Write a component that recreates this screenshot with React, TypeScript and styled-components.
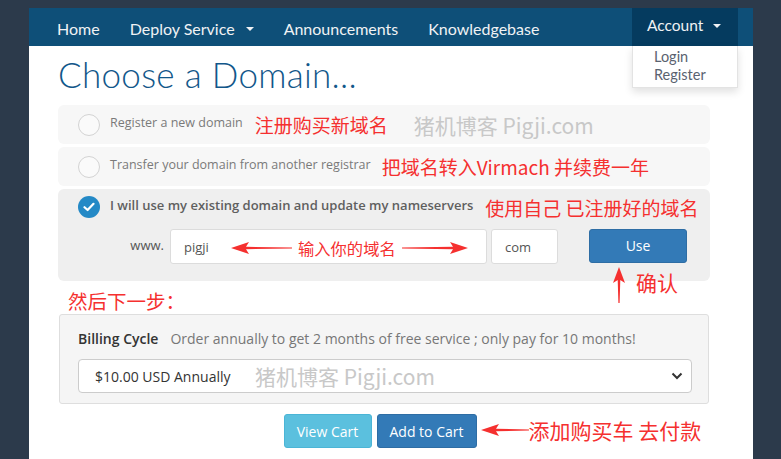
import React from "react";
import styled, { createGlobalStyle } from "styled-components";

const GlobalStyle = createGlobalStyle`
  html, body {
    margin: 0;
    padding: 0;
    background: #2c3a4b;
  }
  body {
    font-family: "Open Sans", "Noto Sans", sans-serif;
  }
  * { box-sizing: border-box; }
`;

const CJK = `"Noto Sans CJK SC", "Noto Sans", sans-serif`;

/* ---------- shell + nav ---------- */

const Shell = styled.div`
  width: 724px;
  min-height: 451px;
  margin: 8px 0 0 29px;
  background: #fff;
`;

const NavBar = styled.nav`
  height: 38px;
  display: flex;
  align-items: stretch;
  background: #0e4f78;
  padding-left: 13px;
  font-family: Lato, "Open Sans", sans-serif;
`;

const NavItem = styled.div<{ $dark?: boolean }>`
  display: flex;
  align-items: center;
  gap: 11px;
  padding: ${(p) => (p.$dark ? "0 15px 4px 15px" : "2px 15px 0 15px")};
  font-size: 16px;
  color: #f0f2f4;
  background: ${(p) => (p.$dark ? "#053b5f" : "transparent")};
  position: relative;
`;

const AccountItem = styled(NavItem)`
  margin-left: auto;
  margin-right: 15px;
  width: 106px;
  font-size: 15.5px;
  gap: 10px;
`;

const Caret = styled.span`
  width: 0;
  height: 0;
  border-left: 4px solid transparent;
  border-right: 4px solid transparent;
  border-top: 4px solid #f0f2f4;
  margin-top: 2px;
`;

const Dropdown = styled.div`
  position: absolute;
  top: 38px;
  left: 0;
  width: 106px;
  padding: 2px 0 3px 21px;
  background: #fff;
  border: 1px solid #e3e3e3;
  border-top: none;
  box-shadow: 0 4px 8px rgba(0, 0, 0, 0.12);
  color: #5a6270;
  font-size: 14.5px;
  line-height: 18px;
  z-index: 5;
`;

/* ---------- content ---------- */

const Content = styled.main`
  width: 652px;
  margin-left: 29px;
`;

const Title = styled.h1`
  margin: 0;
  padding: 7px 0 10px;
  font-family: Lato, "Open Sans", sans-serif;
  font-weight: 300;
  font-size: 35px;
  line-height: 42px;
  color: #12578a;
  letter-spacing: 0.3px;
`;

const OptionPanel = styled.div<{ $active?: boolean }>`
  background: ${(p) => (p.$active ? "#efefef" : "#f7f7f7")};
  border-radius: 6px;
  margin-bottom: ${(p) => (p.$active ? "0" : "3px")};
  padding: ${(p) => (p.$active ? "7px 0 0 20px" : "0 0 0 20px")};
  height: ${(p) => (p.$active ? "92px" : "39px")};
`;

const OptionRow = styled.div`
  height: 39px;
  display: flex;
  align-items: center;
`;

const ActiveRow = styled(OptionRow)`
  height: 22px;
`;

const Radio = styled.span`
  width: 22px;
  height: 22px;
  border-radius: 50%;
  border: 1.5px solid #d3d3d3;
  background: #fafafa;
  flex-shrink: 0;
`;

const CheckedRadio = styled.span`
  width: 22px;
  height: 22px;
  border-radius: 50%;
  background: #2489c6;
  flex-shrink: 0;
  display: flex;
  align-items: center;
  justify-content: center;
`;

const OptionLabel = styled.span<{ $bold?: boolean }>`
  margin-left: 10px;
  font-size: ${(p) => (p.$bold ? 13 : 12.5)}px;
  font-weight: ${(p) => (p.$bold ? 600 : 400)};
  color: ${(p) => (p.$bold ? "#5f5f5f" : "#7a7a7a")};
  margin-top: -5px;
`;

const Note = styled.span<{ $gap: number; $size?: number }>`
  margin-left: ${(p) => p.$gap}px;
  font-family: ${CJK};
  font-size: ${(p) => p.$size ?? 19}px;
  color: #f5302f;
  white-space: nowrap;
`;

const Watermark = styled.span<{ $gap: number }>`
  margin-left: ${(p) => p.$gap}px;
  font-family: ${CJK};
  font-size: 21px;
  color: #c8c8c8;
  white-space: nowrap;
`;

const DomainRow = styled.div`
  display: flex;
  align-items: center;
  margin-top: 11px;
`;

const WwwLabel = styled.span`
  width: 92px;
  text-align: right;
  padding-right: 6px;
  font-size: 13px;
  color: #555;
  margin-top: -4px;
`;

const TextBox = styled.div<{ $w: number }>`
  width: ${(p) => p.$w}px;
  height: 35px;
  background: #fff;
  border: 1px solid #dcdcdc;
  border-radius: 3px;
  display: flex;
  align-items: center;
  padding-left: 13px;
  font-size: 13px;
  color: #555;
  margin-right: 4px;
  position: relative;
`;

const InputNote = styled.div`
  position: absolute;
  left: 60px;
  top: 6px;
  display: flex;
  align-items: center;
  gap: 6px;
`;

const Button = styled.div<{ $variant: "primary" | "info"; $w: number }>`
  width: ${(p) => p.$w}px;
  height: 34px;
  display: flex;
  align-items: center;
  justify-content: center;
  border-radius: 3px;
  font-size: 14px;
  color: #fff;
  background: ${(p) => (p.$variant === "info" ? "#5bc0de" : "#337ab7")};
  border: 1px solid ${(p) => (p.$variant === "info" ? "#4bb5d6" : "#2e6da4")};
`;

const UseWrap = styled.div`
  margin-left: 27px;
  margin-top: -2px;
  position: relative;
`;

const ConfirmNote = styled.div`
  position: absolute;
  left: 24px;
  top: 38px;
  display: flex;
  align-items: flex-start;
  gap: 11px;
`;

const NextStep = styled.div`
  height: 33px;
  padding: 5px 0 0 10px;
  font-family: ${CJK};
  font-size: 19.5px;
  color: #f5302f;
`;

const BillingPanel = styled.section`
  margin-left: 1px;
  width: 650px;
  background: #f5f5f5;
  border: 1px solid #dedede;
  border-radius: 3px;
  padding: 14px 16px 10px 18px;
`;

const BillingHead = styled.div`
  display: flex;
  align-items: baseline;
  height: 22px;
  margin-bottom: 8px;
`;

const BillingTitle = styled.span`
  font-size: 14px;
  font-weight: 600;
  color: #333;
`;

const BillingDesc = styled.span`
  margin-left: 12px;
  font-size: 14px;
  color: #777;
`;

const Select = styled.div`
  height: 34px;
  background: #fff;
  border: 1px solid #ccc;
  border-radius: 4px;
  display: flex;
  align-items: center;
  padding: 0 8px 0 16px;
  font-size: 14px;
  color: #333;
`;

const SelectValue = styled.span`
  width: 160px;
`;

const Chevron = styled.svg`
  margin-left: auto;
`;

const ButtonRow = styled.div`
  display: flex;
  justify-content: center;
  padding: 10px 8px 0 0;
`;

const ButtonGroup = styled.div`
  display: flex;
  gap: 5px;
  position: relative;
`;

const CartNote = styled.div`
  position: absolute;
  left: 100%;
  top: 1px;
  margin-left: 4px;
  display: flex;
  align-items: center;
`;

/* ---------- drawings ---------- */

function ArrowH({ w, dir }: { w: number; dir: "left" | "right" }) {
  const h = 12;
  const head = 18;
  const pts =
    dir === "left"
      ? `0,${h / 2} ${head},0 ${head - 3},${h / 2 - 1.2} ${w},${h / 2 - 0.6} ${w},${h / 2 + 0.6} ${head - 3},${h / 2 + 1.2} ${head},${h}`
      : `${w},${h / 2} ${w - head},0 ${w - head + 3},${h / 2 - 1.2} 0,${h / 2 - 0.6} 0,${h / 2 + 0.6} ${w - head + 3},${h / 2 + 1.2} ${w - head},${h}`;
  return (
    <svg width={w} height={h} viewBox={`0 0 ${w} ${h}`}>
      <polygon points={pts} fill="#f5302f" />
    </svg>
  );
}

function ArrowUp() {
  return (
    <svg width="12" height="36" viewBox="0 0 12 36">
      <polygon points="6,0 12,16 7.3,13 6.6,36 5.4,36 4.7,13 0,16" fill="#f5302f" />
    </svg>
  );
}

function Check() {
  return (
    <svg width="12" height="10" viewBox="0 0 12 10">
      <path d="M1.5 5.2 L4.6 8 L10.5 1.8" fill="none" stroke="#fff" strokeWidth="2.2" strokeLinecap="round" strokeLinejoin="round" />
    </svg>
  );
}

export default function App() {
  return (
    <>
      <GlobalStyle />
      <Shell>
        <NavBar>
          <NavItem>Home</NavItem>
          <NavItem>
            Deploy Service <Caret />
          </NavItem>
          <NavItem>Announcements</NavItem>
          <NavItem>Knowledgebase</NavItem>
          <AccountItem $dark>
            Account <Caret />
            <Dropdown>
              <div>Login</div>
              <div>Register</div>
            </Dropdown>
          </AccountItem>
        </NavBar>

        <Content>
          <Title>Choose a Domain...</Title>

          <OptionPanel>
            <OptionRow>
              <Radio />
              <OptionLabel>Register a new domain</OptionLabel>
              <Note $gap={12}>注册购买新域名</Note>
              <Watermark $gap={26}>猪机博客 Pigji.com</Watermark>
            </OptionRow>
          </OptionPanel>

          <OptionPanel>
            <OptionRow>
              <Radio />
              <OptionLabel>Transfer your domain from another registrar</OptionLabel>
              <Note $gap={11}>把域名转入Virmach 并续费一年</Note>
            </OptionRow>
          </OptionPanel>

          <OptionPanel $active>
            <ActiveRow>
              <CheckedRadio>
                <Check />
              </CheckedRadio>
              <OptionLabel $bold>I will use my existing domain and update my nameservers</OptionLabel>
              <Note $gap={12}>使用自己 已注册好的域名</Note>
            </ActiveRow>
            <DomainRow>
              <WwwLabel>www.</WwwLabel>
              <TextBox $w={317}>
                pigji
                <InputNote>
                  <ArrowH w={61} dir="left" />
                  <Note $gap={0} $size={16.3}>输入你的域名</Note>
                  <ArrowH w={66} dir="right" />
                </InputNote>
              </TextBox>
              <TextBox $w={67}>com</TextBox>
              <UseWrap>
                <Button $variant="primary" $w={98}>
                  Use
                </Button>
                <ConfirmNote>
                  <ArrowUp />
                  <Note $gap={0} $size={21}>确认</Note>
                </ConfirmNote>
              </UseWrap>
            </DomainRow>
          </OptionPanel>

          <NextStep>然后下一步：</NextStep>

          <BillingPanel>
            <BillingHead>
              <BillingTitle>Billing Cycle</BillingTitle>
              <BillingDesc>Order annually to get 2 months of free service ; only pay for 10 months!</BillingDesc>
            </BillingHead>
            <Select>
              <SelectValue>$10.00 USD Annually</SelectValue>
              <Watermark $gap={0}>猪机博客 Pigji.com</Watermark>
              <Chevron width="12" height="8" viewBox="0 0 12 8">
                <path d="M1.5 1.5 L6 6 L10.5 1.5" fill="none" stroke="#333" strokeWidth="2" />
              </Chevron>
            </Select>
          </BillingPanel>

          <ButtonRow>
            <ButtonGroup>
              <Button $variant="info" $w={88}>
                View Cart
              </Button>
              <Button $variant="primary" $w={100}>
                Add to Cart
              </Button>
              <CartNote>
                <ArrowH w={48} dir="left" />
                <Note $gap={0} $size={21}>添加购买车 去付款</Note>
              </CartNote>
            </ButtonGroup>
          </ButtonRow>
        </Content>
      </Shell>
    </>
  );
}
